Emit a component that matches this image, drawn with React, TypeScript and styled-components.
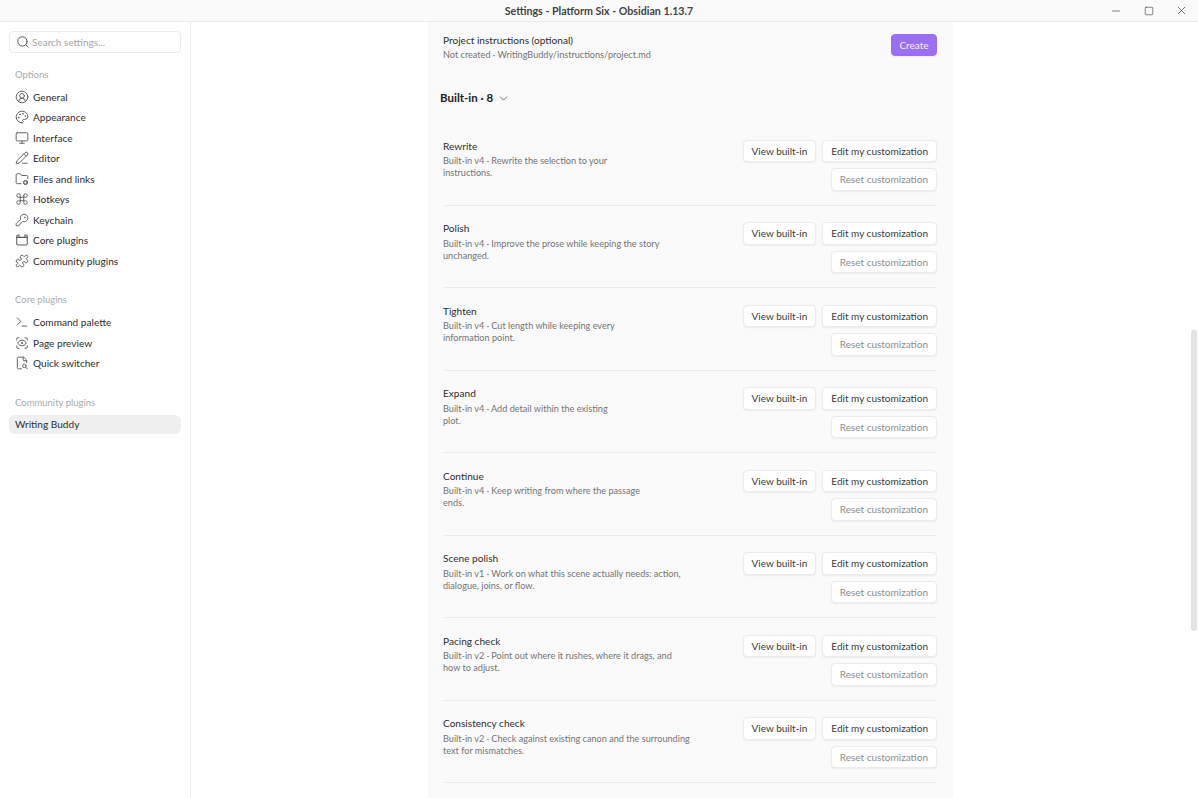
import React from 'react';
import styled, { createGlobalStyle } from 'styled-components';
import { ChevronDown, CircleUserRound, Command, FileSearch2, FolderCog, KeyRound, Minus, Monitor, Palette, PencilLine, Puzzle, ScanEye, Search, Square, Terminal, X } from 'lucide-react';

const Global = createGlobalStyle`
  html, body { margin: 0; padding: 0; height: 100%; overflow: hidden; background: #fff; }
  #root { height: 100%; }
  * { box-sizing: border-box; }
`;
const Page = styled.div`
  height: 798px; display: flex; flex-direction: column; overflow: hidden; position: relative;
  font-family: "Lato", "Open Sans", sans-serif; color: #2e2e2e; background: #fff;
`;
const TitleBar = styled.header`
  height: 22px; flex: none; display: flex; align-items: center; justify-content: center; position: relative;
  background: #fafafa; border-bottom: 1px solid #ececec; font-size: 10.66px; font-weight: 700; color: #444;
`;
const WinControls = styled.div`
  position: absolute; right: 0; top: 0; height: 21px; display: flex; color: #555;
`;
const WinButton = styled.span`
  width: 33px; height: 21px; display: flex; align-items: center; justify-content: center;
`;
const Body = styled.div`
  flex: 1; min-height: 0; display: flex;
`;
const Sidebar = styled.nav`
  width: 191px; flex: none; border-right: 1px solid #ececec; padding: 9px 9px 0; background: #fff;
`;
const SearchBox = styled.div`
  height: 22px; border: 1px solid #ececec; border-radius: 4px; display: flex; align-items: center; gap: 2px;
  padding-left: 6px; font-size: 10px; color: #a8a8a8; margin-bottom: 13.5px;
`;
const SectionLabel = styled.div<{ $gap?: number }>`
  font-size: 9.5px; color: #ababab; padding-left: 6px; height: 16px; line-height: 16px;
  margin-top: ${p => p.$gap ?? 0}px; margin-bottom: 4px;
`;
const NavItem = styled.div<{ $active?: boolean }>`
  height: ${p => (p.$active ? 19 : 20.5)}px; display: flex; align-items: center; gap: 4px; padding-left: 6px;
  border-radius: 6px; font-size: 10.1px; color: #2e2e2e; white-space: nowrap;
  background: ${p => (p.$active ? '#efefef' : 'transparent')};
  svg { color: #5c5c5c; flex: none; }
`;
const Main = styled.main`
  flex: 1; min-width: 0; display: flex; justify-content: center; padding-right: 8px;
`;
const Panel = styled.div`
  width: 525px; background: #fafafa; padding: 0 16px 0 15px; overflow: hidden;
`;
const TopRow = styled.div`
  display: flex; justify-content: space-between; align-items: flex-start; padding-top: 10.5px;
`;
const InfoBlock = styled.div`
  min-width: 0;
`;
const RowTitle = styled.div`
  font-size: 10.1px; line-height: 15px; color: #2e2e2e;
`;
const RowDesc = styled.div`
  font-size: 9.13px; line-height: 12px; color: #757575; margin-top: 1.5px; white-space: nowrap;
`;
const PathDesc = styled(RowDesc)`
  line-height: 14px; margin-top: 0.5px;
`;
const Button = styled.button<{ $disabled?: boolean }>`
  height: 22.5px; padding: 0 8px; font: inherit; font-size: 10px; border-radius: 4px; background: #fff;
  white-space: nowrap; border: 1px solid #ececec; box-shadow: 0 1px 2px rgba(0,0,0,.06);
  color: ${p => (p.$disabled ? '#8e8e8e' : '#3a3a3a')};
`;
const PrimaryButton = styled(Button)`
  background: #9a6ff2; color: #f5f0ff; border-color: #9a6ff2; margin-top: 1px; padding: 0 7.5px;
`;
const GroupHeader = styled.div`
  display: flex; align-items: center; gap: 3.5px; margin: 25.5px 0 0 -3px; height: 20px;
  font-size: 11.5px; font-weight: 700; color: #222; svg { color: #555; margin-top: 1px; }
`;
const List = styled.div`
  margin-top: 15.5px;
`;
const Row = styled.section`
  height: 82.5px; display: flex; justify-content: space-between; padding-top: 15.5px; border-bottom: 1px solid #ededed;
`;
const Actions = styled.div`
  display: flex; flex-wrap: wrap; justify-content: flex-end; align-content: flex-start; gap: 6px; width: 200px; margin-top: 1px;
`;
const ScrollThumb = styled.div`
  position: absolute; right: 1px; top: 330px; width: 6px; height: 301px; border-radius: 3px; background: #e3e3e3;
`;

const CorePlug = () => (
  <svg width="14" height="14" viewBox="0 0 24 24" fill="none" stroke="currentColor" strokeWidth="1.8" strokeLinecap="round" strokeLinejoin="round">
    <path d="M3 7.5h18v11a2 2 0 0 1-2 2H5a2 2 0 0 1-2-2z" /><path d="M3 7.5V5.5a2 2 0 0 1 2-2h2v4M21 7.5V5.5a2 2 0 0 0-2-2h-2v4" />
  </svg>
);

const ic = { size: 14, strokeWidth: 1.6 };
const opts: [string, React.ReactNode][] = [
  ['General', <CircleUserRound {...ic} />],
  ['Appearance', <Palette {...ic} />],
  ['Interface', <Monitor {...ic} />],
  ['Editor', <PencilLine {...ic} />],
  ['Files and links', <FolderCog {...ic} />],
  ['Hotkeys', <Command {...ic} />],
  ['Keychain', <KeyRound {...ic} />],
  ['Core plugins', <CorePlug />],
  ['Community plugins', <Puzzle {...ic} />],
];
const core: [string, React.ReactNode][] = [
  ['Command palette', <Terminal {...ic} />],
  ['Page preview', <ScanEye {...ic} />],
  ['Quick switcher', <FileSearch2 {...ic} />],
];
const rows: [string, string, string][] = [
  ['Rewrite', 'Built-in v4 · Rewrite the selection to your', 'instructions.'],
  ['Polish', 'Built-in v4 · Improve the prose while keeping the story', 'unchanged.'],
  ['Tighten', 'Built-in v4 · Cut length while keeping every', 'information point.'],
  ['Expand', 'Built-in v4 · Add detail within the existing', 'plot.'],
  ['Continue', 'Built-in v4 · Keep writing from where the passage', 'ends.'],
  ['Scene polish', 'Built-in v1 · Work on what this scene actually needs: action,', 'dialogue, joins, or flow.'],
  ['Pacing check', 'Built-in v2 · Point out where it rushes, where it drags, and', 'how to adjust.'],
  ['Consistency check', 'Built-in v2 · Check against existing canon and the surrounding', 'text for mismatches.'],
];

export default function App() {
  return (
    <Page>
      <Global />
      <TitleBar>
        Settings - Platform Six - Obsidian 1.13.7
        <WinControls>
          <WinButton><Minus size={12} strokeWidth={1.5} /></WinButton>
          <WinButton><Square size={10} strokeWidth={1.7} /></WinButton>
          <WinButton><X size={13} strokeWidth={1.5} /></WinButton>
        </WinControls>
      </TitleBar>
      <Body>
        <Sidebar>
          <SearchBox><Search size={14} color="#555" strokeWidth={1.7} />Search settings...</SearchBox>
          <SectionLabel>Options</SectionLabel>
          {opts.map(([n, i]) => <NavItem key={n}>{i}{n}</NavItem>)}
          <SectionLabel $gap={21}>Core plugins</SectionLabel>
          {core.map(([n, i]) => <NavItem key={n}>{i}{n}</NavItem>)}
          <SectionLabel $gap={21}>Community plugins</SectionLabel>
          <NavItem $active>Writing Buddy</NavItem>
        </Sidebar>
        <Main>
          <Panel>
            <TopRow>
              <InfoBlock>
                <RowTitle>Project instructions (optional)</RowTitle>
                <PathDesc>Not created · WritingBuddy/instructions/project.md</PathDesc>
              </InfoBlock>
              <PrimaryButton>Create</PrimaryButton>
            </TopRow>
            <GroupHeader>Built-in · 8 <ChevronDown size={13} strokeWidth={1.5} /></GroupHeader>
            <List>
              {rows.map(([t, a, b]) => (
                <Row key={t}>
                  <InfoBlock>
                    <RowTitle>{t}</RowTitle>
                    <RowDesc>{a}<br />{b}</RowDesc>
                  </InfoBlock>
                  <Actions>
                    <Button>View built-in</Button>
                    <Button>Edit my customization</Button>
                    <Button $disabled>Reset customization</Button>
                  </Actions>
                </Row>
              ))}
            </List>
          </Panel>
        </Main>
      </Body>
      <ScrollThumb />
    </Page>
  );
}
